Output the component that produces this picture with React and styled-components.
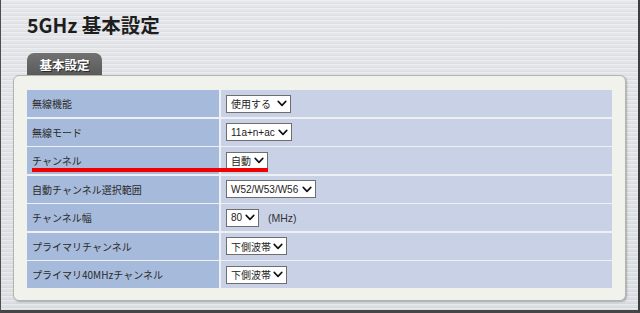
import React from "react";
import styled, { createGlobalStyle } from "styled-components";

const Global = createGlobalStyle`
  html, body { margin: 0; padding: 0; }
  body { width: 640px; height: 313px; overflow: hidden; }
`;

const Frame = styled.div`
  box-sizing: border-box;
  width: 640px;
  height: 313px;
  border-left: 1px solid #4e4e4e;
  border-right: 2px solid #3e3e3e;
  border-bottom: 3px solid #464646;
  padding: 0 12px 0 12px;
  background:
    repeating-linear-gradient(180deg, rgba(255,255,255,0.35) 0 1px, rgba(0,0,0,0) 1px 3px, rgba(0,0,0,0.03) 3px 4px),
    linear-gradient(180deg, #e4e6ea 0%, #dcdfe4 100%);
  font-family: "Liberation Sans", "Noto Sans CJK JP", sans-serif;
  color: #222;
`;

const Title = styled.h1`
  margin: 0;
  padding: 13px 0 0 14px;
  font-family: "Noto Sans CJK JP", sans-serif;
  font-size: 19.5px;
  line-height: 24px;
  font-weight: 700;
  color: #1e1e1e;
`;

const Tab = styled.div`
  box-sizing: border-box;
  margin: 16px 0 0 14px;
  width: 75px;
  height: 22px;
  border-radius: 7px 7px 0 0;
  background: linear-gradient(180deg, #727272 0%, #5a5a5a 100%);
  color: #fff;
  font-family: "Noto Sans CJK JP", sans-serif;
  font-size: 12.5px;
  font-weight: 700;
  line-height: 22px;
  text-align: center;
  text-shadow: 1px 1px 0 #2a2a2a;
  padding-top: 1px;
`;

const Panel = styled.div`
  box-sizing: border-box;
  height: 226px;
  border: 1px solid #b4b4ae;
  border-radius: 6px;
  background: #f2f2ec;
  box-shadow: 1px 1px 2px rgba(0, 0, 0, 0.25);
  padding: 14px 13px 12px 13px;
`;

const Table = styled.div`
  position: relative;
  display: grid;
  grid-template-columns: 192px 1fr;
  grid-template-rows: repeat(7, 1fr);
  gap: 1.5px 2px;
  height: 198px;
  background: #eef0f3;
`;

const LabelCell = styled.div`
  display: flex;
  align-items: center;
  padding-left: 5px;
  background: #a6badb;
  font-family: "Noto Sans CJK JP", sans-serif;
  font-size: 10px;
  color: #2a2a2a;
  white-space: nowrap;
`;

const ValueCell = styled.div`
  display: flex;
  align-items: center;
  gap: 9px;
  padding-left: 5px;
  background: #c9d1e7;
`;

const Select = styled.div`
  box-sizing: border-box;
  display: inline-flex;
  align-items: center;
  justify-content: space-between;
  width: ${(p) => p.$w}px;
  height: 18px;
  padding: 0 3px 0 4px;
  border: 1px solid #6e6e6e;
  background: #fff;
  font-family: "Liberation Sans", "Noto Sans CJK JP", sans-serif;
  font-size: 10px;
  color: #222;
  white-space: nowrap;
`;

const Unit = styled.span`
  font-family: "Liberation Sans", sans-serif;
  font-size: 10.5px;
  color: #333;
`;

const Marker = styled.div`
  position: absolute;
  left: 5px;
  top: 78px;
  width: 236px;
  height: 3.5px;
  background: #f00000;
`;

const Chevron = () => (
  <svg width="10" height="7" viewBox="0 0 10 7">
    <path d="M1.2 1.4 L5 5.4 L8.8 1.4" fill="none" stroke="#111" strokeWidth="1.6" strokeLinecap="round" strokeLinejoin="round" />
  </svg>
);

const rows = [
  { label: "無線機能", value: "使用する", w: 65 },
  { label: "無線モード", value: "11a+n+ac", w: 66 },
  { label: "チャンネル", value: "自動", w: 42 },
  { label: "自動チャンネル選択範囲", value: "W52/W53/W56", w: 90 },
  { label: "チャンネル幅", value: "80", w: 33, unit: "(MHz)" },
  { label: "プライマリチャンネル", value: "下側波帯", w: 61 },
  { label: "プライマリ40MHzチャンネル", value: "下側波帯", w: 61 },
];

export default function App() {
  return (
    <>
      <Global />
      <Frame>
        <Title>5GHz 基本設定</Title>
        <Tab>基本設定</Tab>
        <Panel>
          <Table>
            {rows.map((r) => (
              <React.Fragment key={r.label}>
                <LabelCell>{r.label}</LabelCell>
                <ValueCell>
                  <Select $w={r.w}>
                    <span>{r.value}</span>
                    <Chevron />
                  </Select>
                  {r.unit && <Unit>{r.unit}</Unit>}
                </ValueCell>
              </React.Fragment>
            ))}
            <Marker />
          </Table>
        </Panel>
      </Frame>
    </>
  );
}
